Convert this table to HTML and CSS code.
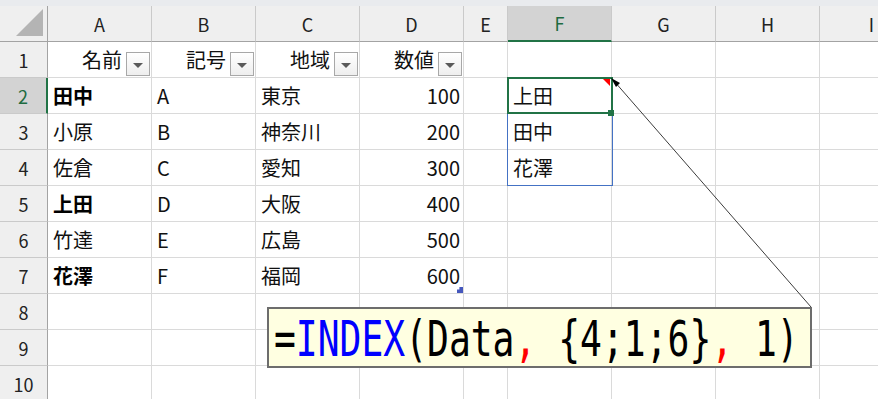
FILE: index.html
```html
<!DOCTYPE html>
<html lang="ja">
<head>
    <meta charset="UTF-8">
    <meta name="viewport" content="width=device-width, initial-scale=1.0">
    <title>INDEX</title>
    <link rel="stylesheet" href="styles.css">
</head>
<body>
    <div id="sheet">
        <div class="band"></div>

        <div class="row head">
            <div class="corner"><svg width="28" height="28" viewBox="0 0 28 28"><polygon points="27,0 27,27 0,27" fill="#b4b4b4"/></svg></div>
            <div>A</div><div>B</div><div>C</div><div>D</div><div>E</div>
            <div class="on">F</div><div>G</div><div>H</div><div>I</div>
        </div>

        <div class="row">
            <div class="rh">1</div>
            <div class="th">名前<span class="drop"></span></div>
            <div class="th">記号<span class="drop"></span></div>
            <div class="th">地域<span class="drop"></span></div>
            <div class="th">数値<span class="drop"></span></div>
            <div></div><div></div><div></div><div></div><div></div>
        </div>
        <div class="row">
            <div class="rh on">2</div>
            <div class="b">田中</div><div>A</div><div>東京</div><div class="num">100</div>
            <div></div><div>上田</div><div></div><div></div><div></div>
        </div>
        <div class="row">
            <div class="rh">3</div>
            <div>小原</div><div>B</div><div>神奈川</div><div class="num">200</div>
            <div></div><div>田中</div><div></div><div></div><div></div>
        </div>
        <div class="row">
            <div class="rh">4</div>
            <div>佐倉</div><div>C</div><div>愛知</div><div class="num">300</div>
            <div></div><div>花澤</div><div></div><div></div><div></div>
        </div>
        <div class="row">
            <div class="rh">5</div>
            <div class="b">上田</div><div>D</div><div>大阪</div><div class="num">400</div>
            <div></div><div></div><div></div><div></div><div></div>
        </div>
        <div class="row">
            <div class="rh">6</div>
            <div>竹達</div><div>E</div><div>広島</div><div class="num">500</div>
            <div></div><div></div><div></div><div></div><div></div>
        </div>
        <div class="row">
            <div class="rh">7</div>
            <div class="b">花澤</div><div>F</div><div>福岡</div><div class="num">600<span class="tbl-end"></span></div>
            <div></div><div></div><div></div><div></div><div></div>
        </div>
        <div class="row">
            <div class="rh">8</div>
            <div></div><div></div><div></div><div></div><div></div><div></div><div></div><div></div><div></div>
        </div>
        <div class="row">
            <div class="rh">9</div>
            <div></div><div></div><div></div><div></div><div></div><div></div><div></div><div></div><div></div>
        </div>
        <div class="row">
            <div class="rh">10</div>
            <div></div><div></div><div></div><div></div><div></div><div></div><div></div><div></div><div></div>
        </div>

        <!-- spill range, active cell and its comment -->
        <div class="spill"></div>
        <div class="active"></div>
        <div class="handle"></div>
        <div class="mark"></div>
        <svg class="callout" width="878" height="399">
            <line x1="614" y1="81" x2="811" y2="307" stroke="#3c3c3c" stroke-width="1"/>
            <polygon points="611,78 620,83 616,87" fill="#000"/>
        </svg>
        <div class="note"><span class="fx">=<b class="fn">INDEX</b>(Data<b class="sep">,</b> {4;1;6}<b class="sep">,</b> 1)</span></div>
    </div>
</body>
</html>
```

FILE: styles.css
```css
* { margin:0; padding:0; box-sizing: border-box;}
body {
    background: #fff;
    font-family: "Noto Sans CJK JP", sans-serif;
    color: #111;
    overflow: hidden;
}
#sheet {
    position: relative;
    width: 878px;
    height: 399px;
    overflow: hidden;
}
.band {
    height: 6px;
    background-color: #e9ebee;
}
.row {
    display: grid;
    grid-template-columns: 48px 104px 104px 104px 104px 44px 104px 104px 104px 104px;
    height: 36px;
    width: 924px;
}
.row > div {
    display: flex;
    align-items: center;
    padding: 0 5px;
    border-right: 1px solid #dadada;
    border-bottom: 1px solid #dadada;
    font-size: 20px;
    white-space: nowrap;
    position: relative;
}
.head > div {
    justify-content: center;
    background-color: #efefef;
    border-right-color: #cacaca;
    border-bottom-color: #a3a3a3;
    color: #222;
    font-size: 18px;
}
.head > .corner {
    border-right-color: #a3a3a3;
    align-items: flex-end;
    justify-content: flex-end;
    padding: 0 3px 4px 0;
}
.corner svg { display: block; }
.head > .on {
    background-color: #d3d3d3;
    color: #1e6b41;
    border-bottom: 2px solid #217346;
}
.row > .rh {
    justify-content: center;
    background-color: #efefef;
    border-right-color: #a3a3a3;
    border-bottom-color: #cacaca;
    color: #222;
    font-size: 18px;
}
.row > .rh.on {
    background-color: #d3d3d3;
    color: #1e6b41;
    border-right: 2px solid #217346;
}
.row > .th {
    justify-content: flex-end;
    padding-right: 1px;
    gap: 4px;
}
.drop {
    align-self: flex-end;
    margin-bottom: 1px;
    width: 24px;
    height: 24px;
    border: 1px solid #a8a8a8;
    background: linear-gradient(#ffffff, #eeeeee);
    display: flex;
    align-items: center;
    justify-content: center;
}
.drop::after {
    content: "";
    border-top: 5px solid #5a5a5a;
    border-left: 5px solid transparent;
    border-right: 5px solid transparent;
    margin-top: 2px;
}
.row > .b {
    font-weight: 700;
    color: #000;
}
.row > .num {
    justify-content: flex-end;
    padding-right: 3px;
}
.tbl-end {
    position: absolute;
    right: 0;
    bottom: 0;
    width: 6px;
    height: 6px;
    background-color: #4557bd;
    clip-path: polygon(40% 0, 100% 0, 100% 100%, 0 100%, 0 40%, 40% 40%);
}
.spill {
    position: absolute;
    left: 507px;
    top: 77px;
    width: 106px;
    height: 109px;
    border: 1px solid #4472c4;
}
.active {
    position: absolute;
    left: 507px;
    top: 77px;
    width: 106px;
    height: 37px;
    border: 2px solid #217346;
}
.handle {
    position: absolute;
    left: 608px;
    top: 110px;
    width: 6px;
    height: 6px;
    background-color: #217346;
}
.mark {
    position: absolute;
    left: 603px;
    top: 79px;
    width: 7px;
    height: 7px;
    background-color: #ff0000;
    clip-path: polygon(0 0, 100% 0, 100% 100%);
}
.callout {
    position: absolute;
    left: 0;
    top: 0;
    pointer-events: none;
}
.note {
    position: absolute;
    left: 267px;
    top: 307px;
    width: 545px;
    height: 61px;
    border: 2px solid #6d6d6d;
    background-color: #ffffe1;
    padding: 6px 0 0 5px;
    overflow: hidden;
}
/* narrow, thin monospace for the formula: squeeze and shave the strokes */
.fx {
    display: inline-block;
    font-family: "DejaVu Sans Mono", monospace;
    font-size: 49px;
    line-height: 50px;
    white-space: pre;
    color: #000;
    -webkit-text-stroke: 1px #ffffe1;
    paint-order: stroke fill;
    transform: scaleX(0.741);
    transform-origin: 0 0;
}
.fx b { font-weight: 400; }
.fn { color: #0000ff; }
.sep { color: #ff0000; }
```
